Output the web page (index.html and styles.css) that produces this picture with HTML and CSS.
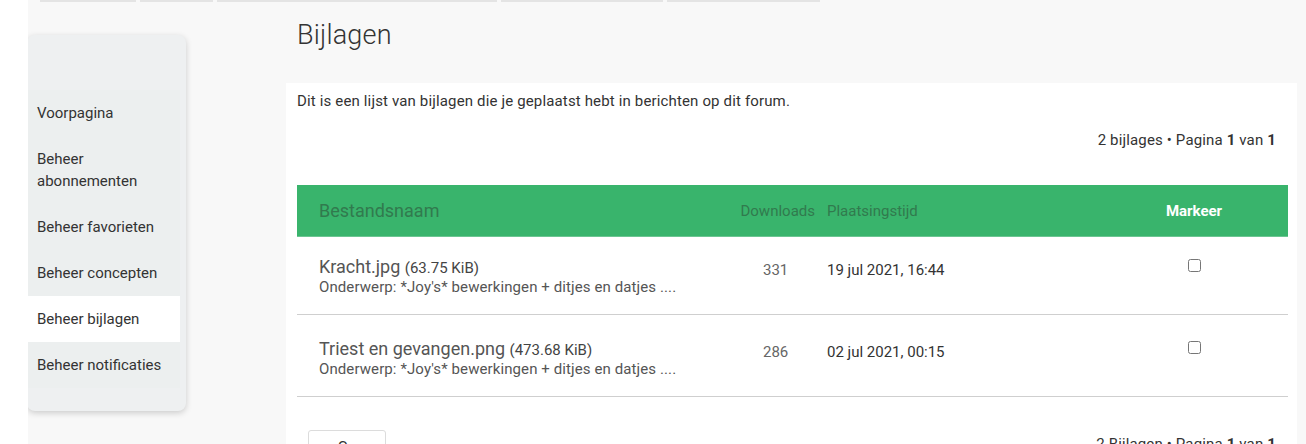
FILE: index.html
```html
<!DOCTYPE html>
<html lang="nl">
<head>
<meta charset="utf-8">
<title>Bijlagen</title>
<link rel="stylesheet" href="styles.css">
</head>
<body>
<div class="page">
  <div class="tabs">
    <span class="tab t1"></span>
    <span class="tab t2"></span>
    <span class="tab t3"></span>
    <span class="tab t4"></span>
    <span class="tab t5"></span>
  </div>
  <div class="layout">
    <nav class="sidebar">
      <a class="nav-item">Voorpagina</a>
      <a class="nav-item">Beheer<br>abonnementen</a>
      <a class="nav-item">Beheer favorieten</a>
      <a class="nav-item">Beheer concepten</a>
      <a class="nav-item active">Beheer bijlagen</a>
      <a class="nav-item">Beheer notificaties</a>
    </nav>
    <main class="main">
      <h2 class="title">Bijlagen</h2>
      <section class="panel">
        <p class="intro">Dit is een lijst van bijlagen die je geplaatst hebt in berichten op dit forum.</p>
        <div class="pagination">2 bijlages • Pagina <b>1</b> van <b>1</b></div>
        <div class="table">
          <div class="thead">
            <div class="c1 h-name">Bestandsnaam</div>
            <div class="c2 h-dim">Downloads</div>
            <div class="c3 h-dim">Plaatsingstijd</div>
            <div class="c4 h-mark">Markeer</div>
          </div>
          <div class="trow first">
            <div class="c1">
              <div class="fname">Kracht.jpg <span class="fsize">(63.75 KiB)</span></div>
              <div class="subject">Onderwerp: *Joy's* bewerkingen + ditjes en datjes ....</div>
            </div>
            <div class="c2 num">331</div>
            <div class="c3 date">19 jul 2021, 16:44</div>
            <div class="c4 mark"><input type="checkbox"></div>
          </div>
          <div class="trow">
            <div class="c1">
              <div class="fname">Triest en gevangen.png <span class="fsize">(473.68 KiB)</span></div>
              <div class="subject">Onderwerp: *Joy's* bewerkingen + ditjes en datjes ....</div>
            </div>
            <div class="c2 num">286</div>
            <div class="c3 date">02 jul 2021, 00:15</div>
            <div class="c4 mark"><input type="checkbox"></div>
          </div>
        </div>
        <div class="footer">
          <button class="btn">Ga</button>
          <div class="pagination bottom">2 Bijlagen • Pagina <b>1</b> van <b>1</b></div>
        </div>
      </section>
    </main>
  </div>
</div>
</body>
</html>
```
FILE: styles.css
```css
html, body {
  margin: 0;
  padding: 0;
  background: #ffffff;
  font-family: Roboto, "Liberation Sans", Arial, sans-serif;
  color: #333;
}
.page {
  margin-left: 28px;
  background: #f8f8f8;
  min-height: 444px;
  overflow: hidden;
}
.tabs {
  display: flex;
  gap: 4px;
  height: 2px;
  padding-left: 12px;
}
.tab {
  height: 2px;
  background: #e4e4e4;
}
.t1 { width: 96px; }
.t2 { width: 73px; }
.t3 { width: 280px; }
.t4 { width: 162px; }
.t5 { width: 153px; }

.layout {
  display: flex;
  gap: 100px;
}
.sidebar {
  margin-top: 33px;
  margin-left: -1px;
  width: 159px;
  height: 376px;
  box-sizing: border-box;
  padding: 55px 6px 0 0;
  background: #eef0f1;
  border-radius: 8px;
  box-shadow: 0 2px 6px rgba(0, 0, 0, 0.18);
  display: flex;
  flex-direction: column;
}
.nav-item {
  display: block;
  margin-left: -2px;
  padding: 12px 0 12px 12px;
  font-size: 15px;
  line-height: 22px;
  color: #333;
  background: #ecefef;
  text-decoration: none;
}
.nav-item.active {
  background: #ffffff;
}

.main {
  flex: 1;
  margin-right: 9px;
  min-width: 0;
}
.title {
  margin: 18px 0 33px 11px;
  font-size: 27px;
  line-height: 30px;
  font-weight: 300;
  color: #333;
  letter-spacing: 0.2px;
}
.panel {
  background: #ffffff;
  padding: 8px 9px 0 11px;
  min-height: 400px;
}
.intro {
  margin: 0;
  font-size: 15px;
  line-height: 20px;
  letter-spacing: 0.15px;
  color: #333;
}
.pagination {
  margin-top: 19px;
  margin-right: 12px;
  text-align: right;
  font-size: 15px;
  line-height: 20px;
  letter-spacing: 0.15px;
  color: #333;
}
.pagination b {
  font-weight: 700;
}

.table {
  margin-top: 35px;
}
.thead, .trow {
  display: grid;
  grid-template-columns: 436px 86px 281px 1fr;
}
.thead {
  height: 52px;
  align-items: center;
  background: #39b46c;
  border-bottom: 1px solid #6cc592;
  box-sizing: border-box;
}
.c1 { padding-left: 22px; }
.c2 { text-align: center; }
.c3 { padding-left: 8px; }
.c4 { text-align: center; }
.h-name {
  font-size: 18px;
  color: #317a4e;
}
.h-dim {
  font-size: 15px;
  color: #317a4e;
}
.c2.h-dim { text-align: right; padding-right: 4px; }
.h-mark {
  font-size: 15px;
  font-weight: 700;
  color: #ffffff;
}
.trow {
  padding: 20px 0 17px;
  border-bottom: 1px solid #cfcfcf;
  align-items: start;
}
.trow + .trow {
  padding-top: 24px;
}
.fname {
  font-size: 18px;
  line-height: 20px;
  height: 20px;
  color: #555;
}
.fsize {
  font-size: 15px;
  line-height: 1;
  color: #444;
}
.subject {
  font-size: 15px;
  line-height: 20px;
  letter-spacing: 0.1px;
  color: #555;
}
.num {
  font-size: 15px;
  line-height: 20px;
  padding-top: 3px;
  color: #666;
  text-align: left;
  padding-left: 30px;
}
.date {
  font-size: 15px;
  line-height: 20px;
  padding-top: 3px;
  color: #333;
}
.mark {
  text-align: left;
  padding-left: 88px;
}
.mark input {
  margin: 2px 0 0 0;
  width: 13px;
  height: 13px;
}

.footer {
  display: flex;
  justify-content: space-between;
  align-items: flex-start;
  padding: 33px 0 0 11px;
}
.btn {
  width: 78px;
  height: 34px;
  background: #ffffff;
  border: 1px solid #dcdcdc;
  border-radius: 3px;
  font-family: Roboto, "Liberation Sans", Arial, sans-serif;
  font-size: 15px;
  color: #333;
}
.pagination.bottom {
  margin-top: 4px;
}
```
